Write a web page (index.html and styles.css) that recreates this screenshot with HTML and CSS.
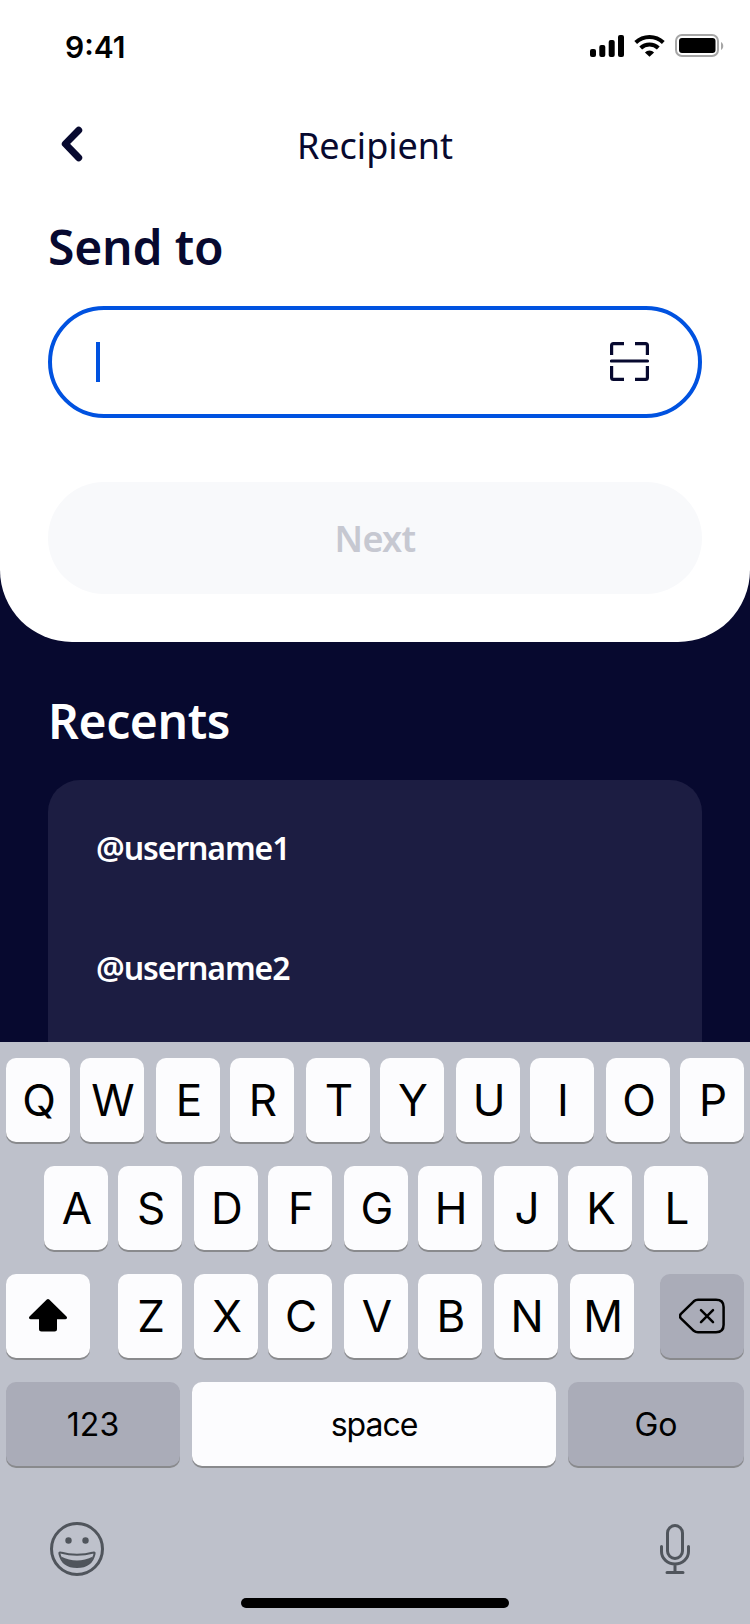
FILE: index.html
```html
<!DOCTYPE html>
<html lang="en">
<head>
<meta charset="utf-8">
<title>Recipient</title>
<link rel="stylesheet" href="styles.css">
</head>
<body>
<div class="screen">
  <main class="sheet">
    <div class="status">
      <span class="time">9:41</span>
      <svg class="status-icons" width="136" height="26" viewBox="0 0 136 26">
        <rect x="0" y="15" width="6" height="8" rx="2"/>
        <rect x="9.3" y="11" width="6" height="12" rx="2"/>
        <rect x="18.7" y="6" width="6" height="17" rx="2"/>
        <rect x="28" y="1" width="6" height="22" rx="2"/>
        <g fill="none" stroke="#000" stroke-width="4">
          <path d="M45.7 8.500a20 20 0 0 1 27.600 0"/>
          <path d="M50.700 14a12.600 12.600 0 0 1 17.600 0"/>
        </g>
        <path d="M59.500 22.800l-4.600-4.400a6.800 6.800 0 0 1 9.200 0z"/>
        <rect x="86" y="1" width="42" height="21" rx="6" fill="none" stroke="#a6a6a6" stroke-width="2"/>
        <rect x="89" y="4" width="36.500" height="15" rx="3"/>
        <path d="M131 8v8c3-1.400 3-6.600 0-8z" fill="#a6a6a6"/>
      </svg>
    </div>
    <nav class="nav">
      <svg class="back" width="24" height="38" viewBox="0 0 24 38"><path d="M19.700 5.200L6.300 18.900 19.700 32.700"/></svg>
      <span class="title">Recipient</span>
    </nav>
    <h1 class="send">Send to</h1>
    <div class="field">
      <span class="caret"></span>
      <svg class="scan" width="40" height="40" viewBox="0 0 40 40">
        <path d="M14 1.600H3.500Q1.600 1.600 1.600 3.500V13M25 1.600h10.500Q37.400 1.600 37.400 3.500V13M1.600 24v11.500Q1.600 37.400 3.500 37.400H14M37.400 24v11.500Q37.400 37.400 35.500 37.400H25"/>
        <path d="M1.500 19h36" stroke-linecap="round"/>
      </svg>
    </div>
    <div class="next">Next</div>
  </main>
  <section class="recents">
    <h2 class="recents-title">Recents</h2>
    <div class="list">
      <div class="item">@username1</div>
      <div class="item">@username2</div>
    </div>
  </section>
  <section class="keyboard">
    <div class="row row-a"><span class="key">Q</span><span class="key">W</span><span class="key">E</span><span class="key">R</span><span class="key">T</span><span class="key">Y</span><span class="key">U</span><span class="key">I</span><span class="key">O</span><span class="key">P</span></div>
    <div class="row row-b"><span class="key">A</span><span class="key">S</span><span class="key">D</span><span class="key">F</span><span class="key">G</span><span class="key">H</span><span class="key">J</span><span class="key">K</span><span class="key">L</span></div>
    <div class="row row-c">
      <span class="key icon-key"><svg width="40" height="36" viewBox="0 0 40 36"><path d="M18.800 1.600Q20 .5 21.200 1.600L38.500 18.600Q40 21 37.500 21.200H29V31Q29 33.500 26.500 33.500H13.500Q11 33.500 11 31V21.200H2.500Q0 21 1.500 18.600z"/></svg></span>
      <span class="key">Z</span><span class="key">X</span><span class="key">C</span><span class="key">V</span><span class="key">B</span><span class="key">N</span><span class="key">M</span>
      <span class="key icon-key dark"><svg width="46" height="36" viewBox="0 0 46 36" fill="none" stroke="#000" stroke-width="2.500" stroke-linecap="round" stroke-linejoin="round"><path d="M19 1.800H37Q44.600 1.800 44.600 9V26.800Q44.600 34.300 37 34.300H19Q16.500 34.300 14.800 32.800L1.900 20.300Q-.1 18.100 1.900 15.900L14.800 3.300Q16.500 1.800 19 1.800z"/><path d="M22 12.200l12 12M34 12.200l-12 12"/></svg></span>
    </div>
    <div class="row row-d"><span class="key dark">123</span><span class="key space">space</span><span class="key dark">Go</span></div>
    <div class="tools">
      <svg width="56" height="56" viewBox="0 0 56 56" fill="none" stroke="#50555c">
        <circle cx="28" cy="28" r="25.500" stroke-width="3"/>
        <g fill="#50555c" stroke="none"><circle cx="19.500" cy="19.500" r="3.200"/><circle cx="36.500" cy="19.500" r="3.200"/></g>
        <path d="M11.500 31.500Q28 36 44.500 31.500Q46 31 45.500 33C43.500 42 37 46 28 46S12.500 42 10.500 33Q10 31 11.500 31.500z" stroke-width="2"/>
        <path d="M12 35.500Q20 39.500 28 39.500T44 35.500C41 43.500 36 46 28 46S15 43.500 12 35.500z" fill="#50555c" stroke="none"/>
      </svg>
      <svg width="32" height="52" viewBox="0 0 32 52" fill="none" stroke="#50555c" stroke-width="3" stroke-linecap="round">
        <rect x="8.500" y="2.500" width="15" height="33" rx="7.500"/>
        <path d="M2.500 23.500v5a13.500 12.500 0 0 0 27 0v-5M16 41v8M8 49.500h16"/>
      </svg>
    </div>
    <div class="home"></div>
  </section>
</div>
</body>
</html>
```

FILE: styles.css
```css
* { box-sizing: border-box; }
body { margin: 0; font-family: "Noto Sans", sans-serif; color: #07092f; }
svg { display: block; }
.screen { width: 750px; height: 1624px; background: #07092f; display: flex; flex-direction: column; overflow: hidden; }
.sheet { height: 642px; background: #fff; border-radius: 0 0 72px 72px; padding: 0 48px; flex: none; }
.status { height: 92px; margin: 0 -24px 0 0; padding-left: 17px; display: flex; align-items: center; justify-content: space-between; }
.time { font: 600 30px/36px Inter, sans-serif; color: #000; padding-top: 1px; }
.status-icons { margin-top: 2px; }
.nav { height: 104px; display: grid; grid-template-columns: 100px 1fr 100px; align-items: center; }
.back { margin-left: 11px; fill: none; stroke: #07092f; stroke-width: 7px; stroke-linecap: round; stroke-linejoin: round; }
.title { font-size: 36px; text-align: center; padding-top: 2px; }
.send { margin: 0 0 10px; padding-top: 2px; font-size: 48px; font-weight: 600; line-height: 98px; letter-spacing: -.2px; }
.field { height: 112px; border: 4px solid #0052e0; border-radius: 56px; display: flex; align-items: center; justify-content: space-between; padding: 0 48px 0 44px; }
.caret { width: 4px; height: 40px; background: #0052e0; }
.scan { fill: none; stroke: #07092f; stroke-width: 3.200px; }
.next { height: 112px; margin-top: 64px; padding-top: 1px; border-radius: 56px; background: #f8f9fb; color: #c6c8d1; font-size: 36px; font-weight: 600; line-height: 112px; text-align: center; letter-spacing: -.7px; }
.recents { flex: 1; min-height: 0; padding: 50px 48px 0; display: flex; flex-direction: column; color: #fff; }
.recents-title { margin: 0 0 30px; font-size: 48px; font-weight: 600; line-height: 58px; letter-spacing: -.4px; }
.list { flex: 1; background: #1c1d42; border-radius: 32px 32px 0 0; padding: 8px 48px 0; }
.item { font-size: 32px; font-weight: 600; line-height: 120px; letter-spacing: -1.100px; }
.keyboard { height: 582px; flex: none; background: #bec1cb; padding: 16px 6px 0; font-family: Inter, sans-serif; color: #000; }
.row { display: grid; height: 84px; margin-bottom: 24px; }
.row-a { grid-template-columns: 74px 76px 74px 76px 74px 76px 74px 76px 74px 64px; }
.row-b { grid-template-columns: 74px 76px 74px 76px 74px 76px 74px 76px 64px; padding-left: 38px; }
.row-c { grid-template-columns: 112px 76px 74px 76px 74px 76px 76px 90px 84px; }
.row-d { grid-template-columns: 174px 364px 176px; gap: 12px; }
.key { width: 64px; height: 84px; border-radius: 10px; background: #fcfcfe; box-shadow: 0 2px 0 #898a8d; font-size: 44px; line-height: 84px; text-align: center; padding-left: 2px; }
.icon-key { width: 84px; display: flex; align-items: center; justify-content: center; padding: 0; }
.row-d .key { width: auto; font-size: 32px; padding: 1px 0 0; }
.row-d .space { letter-spacing: -1px; }
.dark { background: #aaacb8; }
.tools { display: flex; justify-content: space-between; align-items: center; height: 56px; margin-top: 55px; padding: 0 53px 0 43px; }
.home { width: 268px; height: 10px; margin: 21px auto 0; border-radius: 5px; background: #000; }
```
